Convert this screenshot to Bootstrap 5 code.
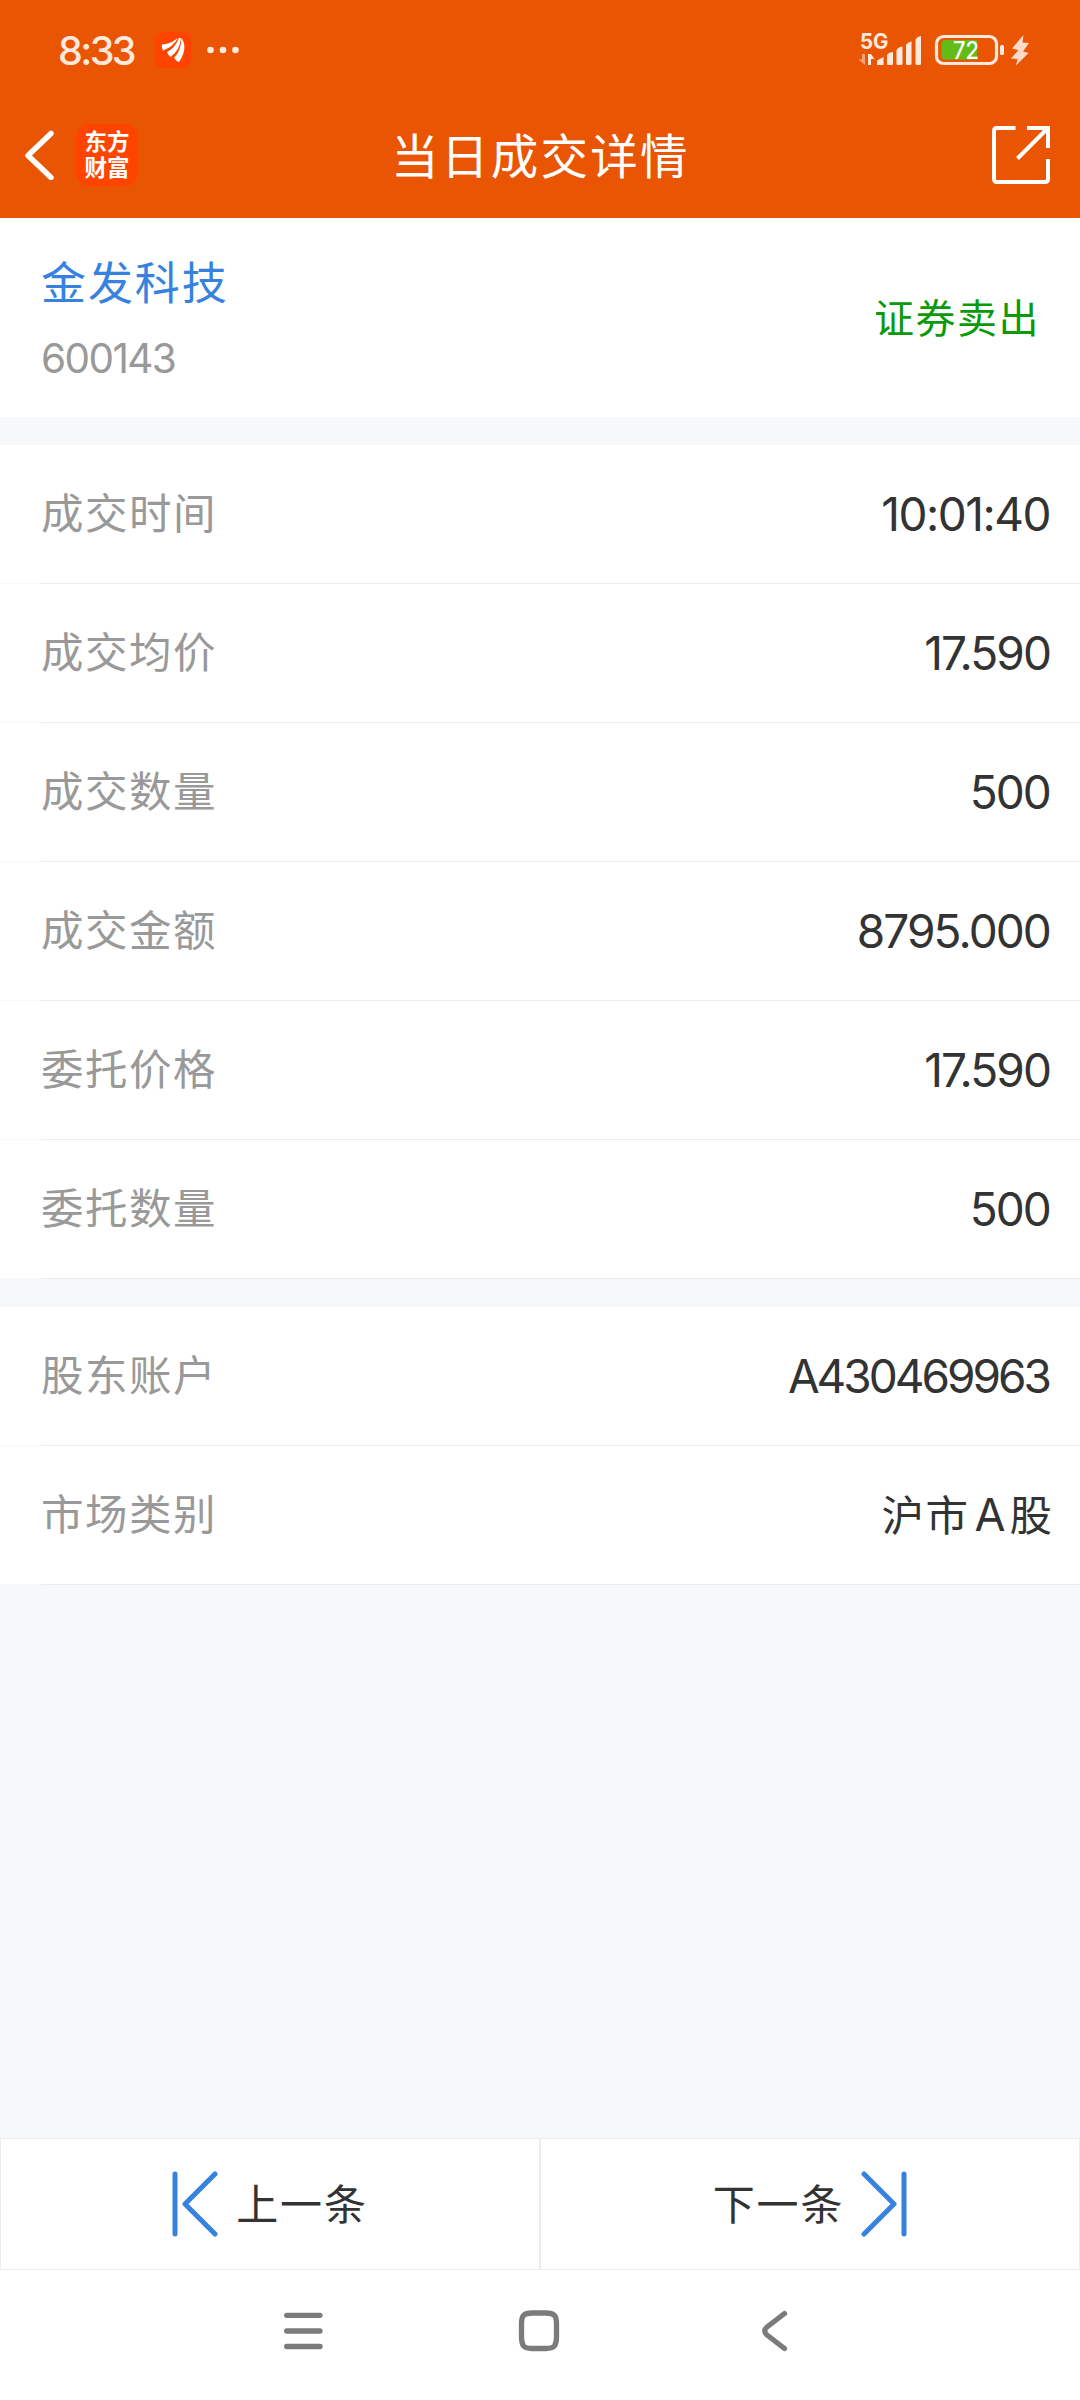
<!DOCTYPE html>
<html lang="zh-CN">
<head>
<meta charset="utf-8">
<meta name="viewport" content="width=device-width, initial-scale=1">
<title>当日成交详情</title>
<link rel="stylesheet" href="https://cdn.jsdelivr.net/npm/bootstrap@5.3.0/dist/css/bootstrap.min.css">
<style>
  body { font-family: Inter, "Noto Sans CJK SC", sans-serif; background: #f6f8fa; color: #333; width: 1080px; height: 2400px; line-height: 1; overflow: hidden; }
  svg { display: block; flex: none; }
  .app-head { background: #ea5504; height: 218px; }
  .status-bar { height: 100px; padding-left: 58px; padding-right: 49px; }
  .clock { font-size: 39.5px; font-weight: 500; color: #fee9dd; width: 97px; letter-spacing: -2.6px; line-height: 44px; padding-top: 2px; }
  .title-bar { height: 110px; padding: 0 30px 0 24px; }
  .side-box { width: 160px; }
  .brand-tile { width: 62px; height: 62px; border-radius: 13px; background: #ff4400; font-size: 22.5px; line-height: 26px; font-weight: 700; margin-left: 21px; }
  .page-title { font-size: 47.5px; letter-spacing: 2.3px; padding: 2px 0 0 7px; }
  .stock-box { height: 199px; padding: 0 40px 0 41px; }
  .stock-name { font-size: 45px; letter-spacing: 1.9px; color: #3682de; line-height: 60px; margin-top: 36px; }
  .stock-code { font-size: 40.5px; letter-spacing: -1.6px; color: #999; line-height: 50px; margin-top: 20px; }
  .side-tag { font-size: 40px; letter-spacing: 1.5px; color: #0a9a0a; padding-top: 2px; }
  .cells + .cells, .stock-box + .cells { margin-top: 28px; }
  .cell { height: 138px; padding: 0 28px 0 41px; }
  .cell-line { height: 1px; margin-left: 41px; background: #ebecee; }
  .cell-label { font-size: 42.5px; letter-spacing: 1.5px; color: #999; }
  .cell-value { font-size: 46px; letter-spacing: -1.9px; margin-right: 2px; }
  .cell-value.is-time { letter-spacing: -1.5px; }
  .cell-value.is-account { letter-spacing: -3px; margin-right: 3px; }
  .cell-text { font-size: 42.5px; letter-spacing: 1.5px; margin-right: -1.5px; }
  .latin-cap { font-size: 45px; line-height: 1; margin: 0 2.5px 0 5px; }
  .pager-btn { height: 132px; border: 1px solid #ececee; font-size: 42px; letter-spacing: 1.8px; }
  .pager-btn span { padding-top: 2px; }
  .prev-text { margin-left: 18px; }
  .next-text { margin-right: 17px; }
  .sys-nav { height: 130px; }
</style>
</head>
<body class="d-flex flex-column">
<header class="app-head text-white">
  <div class="status-bar d-flex align-items-center">
    <span class="clock">8:33</span>
    <svg width="36" height="36" viewBox="0 0 36 36"><rect width="36" height="36" rx="8" fill="#ff4400"/><path fill="#fff" d="M7 12.500Q15 12 23 6Q18 15 8 18.500Q6 15 7 12.500ZM12 20Q20 16 24 6L26 6Q25 18 15.500 25Q13 23 12 20ZM19 26Q26 19 26.500 6Q31 12 28.500 21Q27 26 24 30Q21 29 19 26Z"/></svg>
    <svg class="ms-3" width="34" height="36" viewBox="207 32 34 36" fill="#fee9dd"><circle cx="210.500" cy="50" r="3.300"/><circle cx="223" cy="50" r="3.300"/><circle cx="235.500" cy="50" r="3.300"/></svg>
    <svg class="ms-auto" width="173" height="60" viewBox="858 20 173 60">
      <text x="860" y="48.500" font-family="Inter" font-size="21.500" font-weight="700" fill="#fee9dd" textLength="28.500" lengthAdjust="spacingAndGlyphs">5G</text>
      <path fill="#f9a376" d="M862 54h3v11L858.500 59.500H862Z"/>
      <path fill="#fee9dd" d="M868 54h3l3.500 5H871v6h-3ZM877 60.500L883.500 57V65H877ZM887 55Q888 52.500 893 52V63.500Q893 65 891.500 65H888.500Q887 65 887 63.500ZM896.500 50Q898 47 902.500 46.500V63.500Q902.500 65 901 65H898Q896.500 65 896.500 63.500ZM906 45Q907.500 42 911.500 41.500V63.500Q911.500 65 910 65H907.500Q906 65 906 63.500ZM915.500 39.500Q917 36.500 921 36V63.500Q921 65 919.500 65H917Q915.500 65 915.500 63.500Z"/>
      <rect x="936.500" y="36.500" width="60" height="27" rx="7" fill="none" stroke="#fee9dd" stroke-width="3.200"/>
      <path fill="#62bb16" d="M945 40H977V59.500H945Q941.500 59.500 941.500 56V43.500Q941.500 40 945 40Z"/>
      <text x="953" y="59" font-family="Inter" font-size="24.500" font-weight="500" fill="#fff" textLength="26" lengthAdjust="spacingAndGlyphs">72</text>
      <rect x="1000" y="45" width="4" height="10" rx="1.500" fill="#fee9dd"/>
      <path fill="#fddbc9" d="M1023.500 35L1012 48.500L1018.500 50L1011 58.500L1017.500 59L1016 65.500L1028.500 53L1023 51.500L1029 43L1022.500 42.500Z"/>
    </svg>
  </div>
  <div class="title-bar d-flex align-items-center justify-content-between">
    <div class="side-box d-flex align-items-center">
      <svg width="31" height="50" viewBox="24 130 31 50"><path d="M51 133.500L28 155.500L51 177.500" fill="none" stroke="#fff" stroke-width="5.500" stroke-linecap="round" stroke-linejoin="round"/></svg>
      <div class="brand-tile d-flex flex-column justify-content-center text-center flex-shrink-0"><span>东方</span><span>财富</span></div>
    </div>
    <h1 class="page-title fw-normal mb-0">当日成交详情</h1>
    <div class="side-box d-flex justify-content-end">
      <svg width="58" height="58" viewBox="0 0 58 58" fill="none" stroke="#fff" stroke-width="4"><path d="M23.500 2H5Q2 2 2 5V53Q2 56 5 56H53Q56 56 56 53V33M35 2H56V22M55 3L25.500 32.500"/></svg>
    </div>
  </div>
</header>
<section class="stock-box bg-white d-flex justify-content-between">
  <div><div class="stock-name">金发科技</div><div class="stock-code">600143</div></div>
  <div class="side-tag align-self-center">证券卖出</div>
</section>
<section class="cells">
  <div class="cell bg-white d-flex align-items-center justify-content-between"><span class="cell-label">成交时间</span><span class="cell-value is-time">10:01:40</span></div><div class="cell-line"></div>
  <div class="cell bg-white d-flex align-items-center justify-content-between"><span class="cell-label">成交均价</span><span class="cell-value">17.590</span></div><div class="cell-line"></div>
  <div class="cell bg-white d-flex align-items-center justify-content-between"><span class="cell-label">成交数量</span><span class="cell-value">500</span></div><div class="cell-line"></div>
  <div class="cell bg-white d-flex align-items-center justify-content-between"><span class="cell-label">成交金额</span><span class="cell-value">8795.000</span></div><div class="cell-line"></div>
  <div class="cell bg-white d-flex align-items-center justify-content-between"><span class="cell-label">委托价格</span><span class="cell-value">17.590</span></div><div class="cell-line"></div>
  <div class="cell bg-white d-flex align-items-center justify-content-between"><span class="cell-label">委托数量</span><span class="cell-value">500</span></div><div class="cell-line"></div>
</section>
<section class="cells">
  <div class="cell bg-white d-flex align-items-center justify-content-between"><span class="cell-label">股东账户</span><span class="cell-value is-account">A430469963</span></div><div class="cell-line"></div>
  <div class="cell bg-white d-flex align-items-center justify-content-between"><span class="cell-label">市场类别</span><span class="cell-text">沪市<span class="latin-cap">A</span>股</span></div><div class="cell-line"></div>
</section>
<footer class="mt-auto bg-white">
  <div class="row g-0">
    <div class="col-6 pager-btn d-flex align-items-center justify-content-center">
      <svg width="46" height="66" viewBox="0 0 46 66" fill="none" stroke="#3682de" stroke-width="5" stroke-linecap="round" stroke-linejoin="round"><path d="M3 3V63M43 3L13 33L43 63"/></svg>
      <span class="prev-text">上一条</span>
    </div>
    <div class="col-6 pager-btn d-flex align-items-center justify-content-center">
      <span class="next-text">下一条</span>
      <svg width="46" height="66" viewBox="0 0 46 66" fill="none" stroke="#3682de" stroke-width="5" stroke-linecap="round" stroke-linejoin="round"><path d="M43 3V63M3 3L33 33L3 63"/></svg>
    </div>
  </div>
  <nav class="sys-nav">
    <svg width="1080" height="130" viewBox="0 2270 1080 130" fill="none" stroke="#7b7b7b" stroke-width="5.300" stroke-linecap="round" stroke-linejoin="round"><path d="M286.700 2315.300H320M286.700 2331H320M286.700 2346.500H320"/><path d="M532 2313H546Q552 2313 554.500 2315.500Q556.500 2318 556.500 2324V2337Q556.500 2343 554.500 2346Q552 2348.500 546 2348.500H532Q526 2348.500 523.500 2346Q521.500 2343 521.500 2337V2324Q521.500 2318 523.500 2315.500Q526 2313 532 2313Z"/><path d="M784.500 2313.500L767 2327Q762.500 2331 767 2335L784.500 2348.500"/></svg>
  </nav>
</footer>
<script src="https://cdn.jsdelivr.net/npm/bootstrap@5.3.0/dist/js/bootstrap.bundle.min.js"></script>
</body>
</html>
